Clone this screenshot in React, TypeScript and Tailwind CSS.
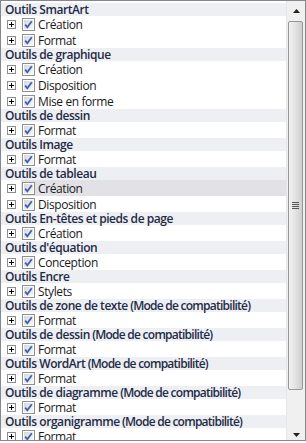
import React from "react";

type Group = { title: string; items: string[]; };

const SUFFIX = " (Mode de compatibilité)";

const groups: Group[] = [
  { title: "Outils SmartArt", items: ["Création", "Format"] },
  { title: "Outils de graphique", items: ["Création", "Disposition", "Mise en forme"] },
  { title: "Outils de dessin", items: ["Format"] },
  { title: "Outils Image", items: ["Format"] },
  { title: "Outils de tableau", items: ["Création", "Disposition"] },
  { title: "Outils En-têtes et pieds de page", items: ["Création"] },
  { title: "Outils d'équation", items: ["Conception"] },
  { title: "Outils Encre", items: ["Stylets"] },
  { title: "Outils de zone de texte (Mode de compatibilité)", items: ["Format"] },
  { title: "Outils de dessin (Mode de compatibilité)", items: ["Format"] },
  { title: "Outils WordArt (Mode de compatibilité)", items: ["Format"] },
  { title: "Outils de diagramme (Mode de compatibilité)", items: ["Format"] },
  { title: "Outils organigramme (Mode de compatibilité)", items: ["Format"] },
];

function PlusBox() {
  return (
    <svg width="9" height="9" viewBox="0 0 9 9" className="shrink-0">
      <rect x="0.5" y="0.5" width="8" height="8" fill="#fff" stroke="#8c8c8c" />
      <path d="M2 4.5H7M4.5 2V7" stroke="#000" strokeWidth="1" />
    </svg>
  );
}

function Check() {
  return (
    <svg width="13" height="13" viewBox="0 0 13 13" className="shrink-0">
      <defs>
        <linearGradient id="cbg" x1="0" y1="0" x2="1" y2="1">
          <stop offset="0" stopColor="#d6d8dc" />
          <stop offset="1" stopColor="#f6f6f6" />
        </linearGradient>
      </defs>
      <rect x="0.5" y="0.5" width="12" height="12" fill="#fff" stroke="#8e8f8f" />
      <rect x="2" y="2" width="9" height="9" fill="url(#cbg)" />
      <path d="M3.2 6.6L5.3 9.2L9.8 3.2" fill="none" stroke="#3f5fb0" strokeWidth="1.8" />
    </svg>
  );
}

function Title({ text }: { text: string }) {
  if (text.endsWith(SUFFIX)) {
    return (
      <>
        {text.slice(0, text.length - SUFFIX.length)}
        <span className="tracking-[-0.75px]">{SUFFIX}</span>
      </>
    );
  }
  return <>{text}</>;
}

export default function App() {
  return (
    <div className="w-[306px] h-[443px] bg-white">
      <div
        className="w-[306px] h-[441px] border border-[#828790] flex bg-white overflow-hidden"
        style={{ fontFamily: '"Open Sans", "Noto Sans", sans-serif' }}
      >
        <div className="w-[285px] pt-[2px] overflow-hidden">
          {groups.map((g, gi) => (
            <div key={gi}>
              <div className="h-[13px] bg-[#eeeff3] pl-[4px] text-[12px] leading-[13px] font-semibold text-[#1e2b45] whitespace-nowrap tracking-[-0.45px]">
                <Title text={g.title} />
              </div>
              {g.items.map((it, ii) => {
                const sel = gi === 4 && ii === 0;
                return (
                  <div key={ii} className="h-[16px] flex items-center">
                    <div className="w-[20px] pl-[6px] flex items-center">
                      <PlusBox />
                    </div>
                    <div className={"flex-1 h-[16px] flex items-center pl-[1px] " + (sel ? "bg-[#e2e2e6]" : "")}>
                      <Check />
                      <span className="ml-[3px] text-[12px] leading-[15px] text-[#1a1a1a] whitespace-nowrap tracking-[-0.4px]">{it}</span>
                    </div>
                  </div>
                );
              })}
            </div>
          ))}
        </div>
        <div className="w-[19px] h-full bg-[#f0f0f0] border-l border-[#e6e6e6] flex flex-col items-center">
          <div className="h-[20px] w-full flex items-center justify-center">
            <svg width="7" height="4" viewBox="0 0 7 4"><path d="M3.5 0L7 4H0Z" fill="#222" /></svg>
          </div>
          <div className="w-[15px] h-[369px] -ml-[1px] rounded-[2px] border border-[#979797] bg-gradient-to-r from-[#f2f2f2] via-[#e2e2e2] to-[#cfcfcf] flex items-center justify-center">
            <div className="flex flex-col gap-[1px]">
              <div className="w-[7px] h-[1px] bg-[#555]" />
              <div className="w-[7px] h-[1px] bg-[#555]" />
              <div className="w-[7px] h-[1px] bg-[#555]" />
              <div className="w-[7px] h-[1px] bg-[#555]" />
            </div>
          </div>
          <div className="flex-1 w-full flex items-end justify-center pb-[3px]">
            <svg width="7" height="4" viewBox="0 0 7 4"><path d="M0 0H7L3.5 4Z" fill="#222" /></svg>
          </div>
        </div>
      </div>
    </div>
  );
}
